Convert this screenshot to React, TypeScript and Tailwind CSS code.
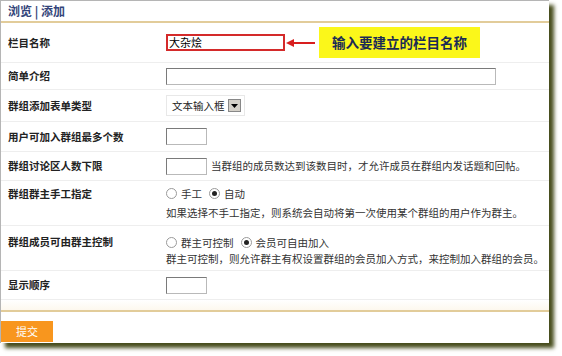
import React from 'react';

const font = { fontFamily: '"Noto Sans CJK SC", "Liberation Sans", sans-serif' };

const Row: React.FC<{ label: string; h: string; children: React.ReactNode; pt?: string }> = ({ label, h, children, pt }) => (
  <div className={`grid grid-cols-[165px_1fr] border-b border-[#eeeeee] whitespace-nowrap ${h}`}>
    <div className={`pl-[7px] text-[10.5px] font-bold text-[#222] flex ${pt ? `items-start ${pt}` : 'items-center'}`}>{label}</div>
    <div className={`flex ${pt ? `flex-col ${pt}` : 'items-center'}`}>{children}</div>
  </div>
);

const Box: React.FC<{ w: string; red?: boolean; children?: React.ReactNode }> = ({ w, red, children }) => (
  <div
    className={`${w} h-[17px] bg-white text-[11px] leading-[13px] pl-[1px] text-black ${
      red ? 'border-2 border-[#d42a2a]' : 'border border-[#b9b9b9] border-t-[#7a7a7a] border-l-[#7a7a7a]'
    }`}
  >
    {children}
  </div>
);

const Radio: React.FC<{ on?: boolean; label: string }> = ({ on, label }) => (
  <span className="flex items-center gap-[4px] mr-[7px] text-[10.5px] leading-[13px] text-[#333]">
    <span className="w-[11px] h-[11px] rounded-full border border-[#9a9a9a] bg-white flex items-center justify-center">
      {on && <span className="w-[5px] h-[5px] rounded-full bg-[#222]" />}
    </span>
    {label}
  </span>
);

export default function App() {
  return (
    <div className="w-[562px] h-[356px] bg-white" style={font}>
      <div className="w-[549px] h-[343px] bg-white border-l border-t border-[#b5b5b5] shadow-[5px_5px_4px_#474d1d] flex flex-col">
        <div className="h-[22px] border-b-2 border-[#e2cc9a] flex items-center pl-[7px] text-[12px] font-bold text-[#33457a]">
          浏览 | 添加
        </div>
        <Row label="栏目名称" h="h-[40px]">
          <Box w="w-[119px]" red>大杂烩</Box>
          <svg width="30" height="10" viewBox="0 0 30 10" className="ml-[1px]">
            <line x1="6" y1="5" x2="29" y2="5" stroke="#d81e1e" strokeWidth="2" />
            <polygon points="0,5 8,1 8,9" fill="#d81e1e" />
          </svg>
          <div className="ml-[3px] w-[161px] h-[31px] bg-[#fbf71a] flex items-center justify-center text-[13.5px] font-bold text-[#1a2b55]">
            输入要建立的栏目名称
          </div>
        </Row>
        <Row label="简单介绍" h="h-[27px]">
          <Box w="w-[330px]" />
        </Row>
        <Row label="群组添加表单类型" h="h-[32px]">
          <div className="w-[79px] h-[21px] border border-[#e8e8e8] bg-white flex items-center justify-between pl-[5px] pr-[3px] text-[10.5px] text-[#222]">
            文本输入框
            <span className="w-[13px] h-[13px] bg-[#d4d0c8] border border-[#888] flex items-center justify-center">
              <svg width="7" height="4" viewBox="0 0 7 4"><polygon points="0,0 7,0 3.5,4" fill="#000" /></svg>
            </span>
          </div>
        </Row>
        <Row label="用户可加入群组最多个数" h="h-[30px]">
          <Box w="w-[41px]" />
        </Row>
        <Row label="群组讨论区人数下限" h="h-[29px]">
          <Box w="w-[41px]" />
          <span className="ml-[4px] text-[10.5px] text-[#333]">当群组的成员数达到该数目时，才允许成员在群组内发话题和回帖。</span>
        </Row>
        <Row label="群组群主手工指定" h="h-[45px]" pt="pt-[5px]">
          <div className="flex items-center mt-[1px]">
            <Radio label="手工" />
            <Radio on label="自动" />
          </div>
          <div className="text-[10.5px] leading-[13px] text-[#333] mt-[6px]">如果选择不手工指定，则系统会自动将第一次使用某个群组的用户作为群主。</div>
        </Row>
        <Row label="群组成员可由群主控制" h="h-[45px]" pt="pt-[8px]">
          <div className="flex items-center mt-[2px]">
            <Radio label="群主可控制" />
            <Radio on label="会员可自由加入" />
          </div>
          <div className="text-[10.5px] leading-[13px] text-[#333] mt-[3px]">群主可控制，则允许群主有权设置群组的会员加入方式，来控制加入群组的会员。</div>
        </Row>
        <Row label="显示顺序" h="h-[29px]">
          <Box w="w-[41px]" />
        </Row>
        <div className="h-[12px] bg-gradient-to-b from-white to-[#fdf8ee] border-b-2 border-[#e2cc9a]" />
        <div className="pt-[5px]">
          <button className="w-[52px] h-[21px] bg-[#f8961e] text-white text-[11px] text-left pl-[15px]">提交</button>
        </div>
      </div>
    </div>
  );
}
